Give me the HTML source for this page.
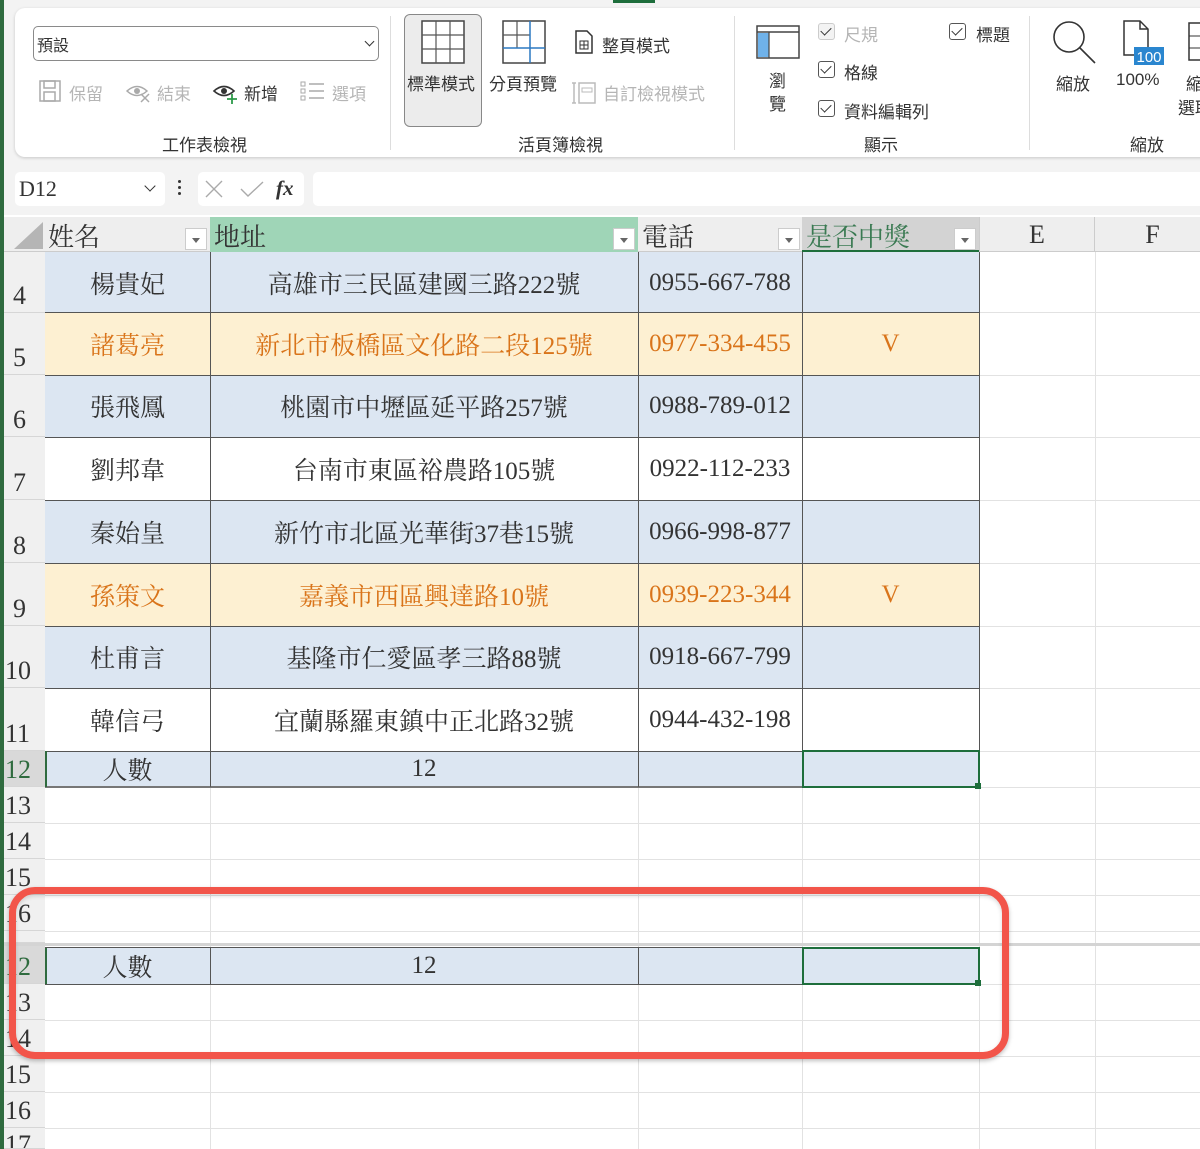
<!DOCTYPE html>
<html><head><meta charset="utf-8">
<style>
*{margin:0;padding:0;box-sizing:border-box}
body{width:1200px;height:1149px;overflow:hidden;background:#fff;position:relative;font-family:"Liberation Sans","Noto Sans CJK TC",sans-serif;color:#333}
.a{position:absolute}
.rb{font-size:17px;color:#333;white-space:nowrap}
.dis{color:#b5b5b5}
.cell{position:absolute;display:flex;align-items:center;justify-content:center;font-family:"Liberation Serif","Noto Serif CJK SC",serif;font-size:25px;color:#333}
.rh{position:absolute;left:4px;width:41px;background:#f0f0f0;border-bottom:1px solid #d6d6d6;font-family:"Liberation Serif",serif;font-size:26px;color:#333;display:flex;align-items:flex-end;padding-left:9px;line-height:1;padding-bottom:3px;overflow:hidden}
.hl{position:absolute;left:45px;right:0;height:1px;background:#e2e2e2}
.vl{position:absolute;width:1px;background:#e2e2e2}
.cb{position:absolute;width:17px;height:17px;border:1.5px solid #555;border-radius:3px}
.cb::after{content:"";position:absolute;left:4px;top:1px;width:5px;height:9px;border:solid #333;border-width:0 1.6px 1.6px 0;transform:rotate(45deg)}
.dd{position:absolute;width:22px;height:22px;background:#fff;border:1px solid #ccc}
.dd::after{content:"";position:absolute;left:6px;top:9px;border:4px solid transparent;border-top:5px solid #666}
</style></head><body>
<div class="a" style="left:0;top:0;width:1200px;height:215px;background:#f3f3f3"></div>
<div class="a" style="left:0;top:0;width:4px;height:1149px;background:#2f6b3f"></div>
<div class="a" style="left:613px;top:0;width:42px;height:3px;background:#1e6e3c"></div>
<div class="a" style="left:15px;top:8px;width:1200px;height:149px;background:#fff;border-radius:10px;box-shadow:0 1px 3px rgba(0,0,0,.18)"></div>
<div class="a" style="left:33px;top:26px;width:346px;height:35px;border:1px solid #8a8a8a;border-radius:5px;background:#fff"></div>
<div class="a rb" style="left:37px;top:32px;font-size:16px">預設</div>
<div class="a" style="left:366px;top:38px;width:7px;height:7px;border:solid #333;border-width:0 1.5px 1.5px 0;transform:rotate(45deg)"></div>
<svg class="a" style="left:38px;top:79px" width="24" height="24" viewBox="0 0 24 24"><rect x="2" y="2" width="20" height="20" fill="none" stroke="#aaa" stroke-width="1.5"/><rect x="6" y="2" width="11" height="7" fill="none" stroke="#aaa" stroke-width="1.5"/><rect x="6" y="13" width="11" height="9" fill="none" stroke="#aaa" stroke-width="1.5"/></svg>
<div class="a rb dis" style="left:69px;top:80px">保留</div>
<svg class="a" style="left:125px;top:82px" width="28" height="22" viewBox="0 0 28 22"><path d="M2 9 Q12 0 22 9 Q12 18 2 9Z" fill="none" stroke="#aaa" stroke-width="1.5"/><circle cx="12" cy="9" r="3" fill="#aaa"/><path d="M16 12 L24 20 M24 12 L16 20" stroke="#aaa" stroke-width="1.5"/></svg>
<div class="a rb dis" style="left:157px;top:80px">結束</div>
<svg class="a" style="left:212px;top:82px" width="28" height="22" viewBox="0 0 28 22"><path d="M2 9 Q12 0 22 9 Q12 18 2 9Z" fill="none" stroke="#333" stroke-width="1.6"/><circle cx="12" cy="9" r="3" fill="#333"/><path d="M20 12 V22 M15 17 H25" stroke="#2e9a4a" stroke-width="1.8"/></svg>
<div class="a rb" style="left:244px;top:80px">新增</div>
<svg class="a" style="left:300px;top:80px" width="26" height="22" viewBox="0 0 26 22"><rect x="1" y="2" width="4" height="4" fill="none" stroke="#aaa"/><rect x="1" y="9" width="4" height="4" fill="none" stroke="#aaa"/><rect x="1" y="16" width="4" height="4" fill="none" stroke="#aaa"/><path d="M9 4H24M9 11H24M9 18H24" stroke="#aaa" stroke-width="1.5"/></svg>
<div class="a rb dis" style="left:332px;top:80px">選項</div>
<div class="a rb" style="left:162px;top:131px">工作表檢視</div>
<div class="a" style="left:390px;top:16px;width:1px;height:134px;background:#ddd"></div>
<div class="a" style="left:404px;top:14px;width:78px;height:113px;background:#ececec;border:1.5px solid #888;border-radius:6px"></div>
<svg class="a" style="left:421px;top:20px" width="44" height="44" viewBox="0 0 44 44"><rect x="1" y="1" width="42" height="42" fill="#fff" stroke="#444" stroke-width="1.5"/><path d="M15 1V43M29 1V43M1 15H43M1 29H43" stroke="#555" stroke-width="1.2"/></svg>
<div class="a rb" style="left:407px;top:70px">標準模式</div>
<svg class="a" style="left:502px;top:20px" width="44" height="44" viewBox="0 0 44 44"><rect x="1" y="1" width="42" height="42" fill="#fff" stroke="#444" stroke-width="1.5"/><path d="M15 1V28M1 15H28" stroke="#555" stroke-width="1.2"/><path d="M28 1V43M1 28H43" stroke="#2b79c2" stroke-width="1.5"/></svg>
<div class="a rb" style="left:489px;top:70px">分頁預覽</div>
<svg class="a" style="left:574px;top:30px" width="20" height="24" viewBox="0 0 20 24"><path d="M2 1H13L18 6V23H2Z" fill="none" stroke="#333" stroke-width="1.5"/><rect x="6" y="11" width="8" height="8" fill="none" stroke="#333"/><path d="M10 11V19M6 15H14" stroke="#333"/></svg>
<div class="a rb" style="left:602px;top:32px">整頁模式</div>
<svg class="a" style="left:571px;top:79px" width="26" height="26" viewBox="0 0 26 26"><path d="M3 4V24M1 4H5M1 24H5" stroke="#bbb" stroke-width="1.5"/><rect x="8" y="4" width="16" height="20" fill="none" stroke="#bbb" stroke-width="1.5"/><rect x="11" y="9" width="10" height="4" fill="none" stroke="#bbb"/></svg>
<div class="a rb dis" style="left:603px;top:80px">自訂檢視模式</div>
<div class="a rb" style="left:518px;top:131px">活頁簿檢視</div>
<div class="a" style="left:734px;top:16px;width:1px;height:134px;background:#ddd"></div>
<svg class="a" style="left:756px;top:25px" width="44" height="34" viewBox="0 0 44 34"><rect x="1" y="1" width="42" height="32" fill="#fff" stroke="#444" stroke-width="1.5"/><path d="M1 7H43" stroke="#444" stroke-width="1.5"/><rect x="2" y="8" width="11" height="24" fill="#6fb2ea"/><path d="M13 7V33" stroke="#444" stroke-width="1.2"/></svg>
<div class="a rb" style="left:769px;top:70px;line-height:23px">瀏<br>覽</div>
<div class="cb" style="left:818px;top:23px;border-color:#ccc;background:#f3f3f3"></div>
<div class="a rb dis" style="left:844px;top:21px">尺規</div>
<div class="cb" style="left:818px;top:61px"></div>
<div class="a rb" style="left:844px;top:59px">格線</div>
<div class="cb" style="left:818px;top:100px"></div>
<div class="a rb" style="left:844px;top:98px">資料編輯列</div>
<div class="cb" style="left:949px;top:23px"></div>
<div class="a rb" style="left:976px;top:21px">標題</div>
<div class="a rb" style="left:864px;top:131px">顯示</div>
<div class="a" style="left:1029px;top:16px;width:1px;height:134px;background:#ddd"></div>
<svg class="a" style="left:1050px;top:18px" width="48" height="48" viewBox="0 0 48 48"><circle cx="19" cy="19" r="15" fill="none" stroke="#333" stroke-width="1.6"/><path d="M30 30L45 45" stroke="#333" stroke-width="1.6"/></svg>
<div class="a rb" style="left:1056px;top:70px">縮放</div>
<svg class="a" style="left:1120px;top:20px" width="46" height="46" viewBox="0 0 46 46"><path d="M4 1H20L28 9V35H4Z" fill="none" stroke="#333" stroke-width="1.5"/><path d="M20 1V9H28" fill="none" stroke="#333" stroke-width="1.5"/><rect x="14" y="27" width="30" height="18" fill="#2a86cf"/><text x="29" y="42" font-family="Liberation Sans" font-size="15" fill="#fff" text-anchor="middle">100</text></svg>
<div class="a rb" style="left:1116px;top:70px">100%</div>
<svg class="a" style="left:1188px;top:22px" width="12" height="40" viewBox="0 0 12 40"><rect x="1" y="1" width="20" height="37" fill="none" stroke="#333" stroke-width="1.5"/><path d="M1 14H12M1 26H12" stroke="#333"/></svg>
<div class="a rb" style="left:1186px;top:70px">縮</div>
<div class="a rb" style="left:1178px;top:94px">選取</div>
<div class="a rb" style="left:1130px;top:131px">縮放</div>
<div class="a" style="left:15px;top:172px;width:150px;height:34px;background:#fff;border-radius:5px"></div>
<div class="a" style="left:19px;top:176px;font-family:'Liberation Serif',serif;font-size:22px;color:#333">D12</div>
<div class="a" style="left:146px;top:182px;width:8px;height:8px;border:solid #333;border-width:0 1.5px 1.5px 0;transform:rotate(45deg)"></div>
<div class="a" style="left:178px;top:180px;width:3px;height:3px;background:#333;border-radius:2px;box-shadow:0 6px 0 #333,0 12px 0 #333"></div>
<div class="a" style="left:198px;top:172px;width:106px;height:34px;background:#fff;border-radius:5px"></div>
<svg class="a" style="left:203px;top:178px" width="100" height="24" viewBox="0 0 100 24"><path d="M3 3L19 19M19 3L3 19" stroke="#aaa" stroke-width="1.4"/><path d="M38 11L45 18L60 4" stroke="#aaa" stroke-width="1.4" fill="none"/><text x="73" y="17" font-family="Liberation Serif" font-style="italic" font-weight="bold" font-size="21" fill="#333">fx</text></svg>
<div class="a" style="left:313px;top:172px;width:900px;height:34px;background:#fff;border-radius:5px"></div>
<div class="a" style="left:4px;top:217px;width:1196px;height:35px;background:#eeeeee;border-bottom:1px solid #ccc"></div>
<svg class="a" style="left:10px;top:220px" width="34" height="30"><path d="M33 2V29H4Z" fill="#b5b5b5"/></svg>
<div class="a" style="left:210px;top:217px;width:428px;height:35px;background:#9fd5b7"></div>
<div class="a" style="left:802px;top:217px;width:177px;height:35px;background:#d3d3d3;border-bottom:2px solid #1e6e3c"></div>
<div class="cell" style="left:48px;top:218px;height:34px;justify-content:flex-start;font-size:26px">姓名</div>
<div class="dd" style="left:185px;top:228px"></div>
<div class="cell" style="left:214px;top:218px;height:34px;justify-content:flex-start;font-size:26px">地址</div>
<div class="dd" style="left:613px;top:228px"></div>
<div class="cell" style="left:642px;top:218px;height:34px;justify-content:flex-start;font-size:26px">電話</div>
<div class="dd" style="left:778px;top:228px"></div>
<div class="cell" style="left:806px;top:218px;height:34px;justify-content:flex-start;font-size:26px;color:#3a7a52">是否中獎</div>
<div class="dd" style="left:954px;top:228px"></div>
<div class="cell" style="left:979px;top:218px;width:116px;height:34px;font-size:26px">E</div>
<div class="cell" style="left:1095px;top:218px;width:115px;height:34px;font-size:26px">F</div>
<div class="a" style="left:1094px;top:217px;width:1px;height:35px;background:#ccc"></div>
<div class="a" style="left:979px;top:217px;width:1px;height:35px;background:#ccc"></div>
<div class="vl" style="left:210px;top:252px;height:897px"></div>
<div class="vl" style="left:638px;top:252px;height:897px"></div>
<div class="vl" style="left:802px;top:252px;height:897px"></div>
<div class="vl" style="left:979px;top:252px;height:897px"></div>
<div class="vl" style="left:1095px;top:252px;height:897px"></div>
<div class="hl" style="top:312px"></div><div class="hl" style="top:375px"></div><div class="hl" style="top:437px"></div><div class="hl" style="top:500px"></div><div class="hl" style="top:563px"></div><div class="hl" style="top:626px"></div><div class="hl" style="top:688px"></div><div class="hl" style="top:751px"></div><div class="hl" style="top:787px"></div><div class="hl" style="top:823px"></div><div class="hl" style="top:859px"></div><div class="hl" style="top:895px"></div><div class="hl" style="top:931px"></div><div class="hl" style="top:984px"></div><div class="hl" style="top:1020px"></div><div class="hl" style="top:1056px"></div><div class="hl" style="top:1092px"></div><div class="hl" style="top:1128px"></div>
<div class="a" style="left:4px;top:943px;width:1196px;height:3px;background:#d4d4d4"></div>
<div class="rh" style="top:252px;height:61px">4</div>
<div class="rh" style="top:313px;height:62px">5</div>
<div class="rh" style="top:375px;height:62px">6</div>
<div class="rh" style="top:437px;height:63px">7</div>
<div class="rh" style="top:500px;height:63px">8</div>
<div class="rh" style="top:563px;height:63px">9</div>
<div class="rh" style="top:626px;height:62px;padding-left:1px">10</div>
<div class="rh" style="top:688px;height:63px;padding-left:1px">11</div>
<div class="rh" style="top:751px;height:36px;padding-left:1px;background:#d9d9d9;color:#2f6b3f">12</div>
<div class="rh" style="top:787px;height:36px;padding-left:1px">13</div>
<div class="rh" style="top:823px;height:36px;padding-left:1px">14</div>
<div class="rh" style="top:859px;height:36px;padding-left:1px">15</div>
<div class="rh" style="top:895px;height:36px;padding-left:1px">16</div>
<div class="rh" style="top:931px;height:12px;padding-left:1px"></div>
<div class="rh" style="top:946px;height:38px;padding-left:1px;background:#d9d9d9;color:#2f6b3f">12</div>
<div class="rh" style="top:984px;height:36px;padding-left:1px">13</div>
<div class="rh" style="top:1020px;height:36px;padding-left:1px">14</div>
<div class="rh" style="top:1056px;height:36px;padding-left:1px">15</div>
<div class="rh" style="top:1092px;height:36px;padding-left:1px">16</div>
<div class="rh" style="top:1128px;height:21px;padding-left:1px;align-items:flex-start;padding-top:4px">17</div>
<div class="a" style="left:45px;top:252px;width:934px;height:61px;background:#dce6f2"></div>
<div class="a" style="left:45px;top:313px;width:934px;height:62px;background:#fdf0d2"></div>
<div class="a" style="left:45px;top:375px;width:934px;height:62px;background:#dce6f2"></div>
<div class="a" style="left:45px;top:437px;width:934px;height:63px;background:#fff"></div>
<div class="a" style="left:45px;top:500px;width:934px;height:63px;background:#dce6f2"></div>
<div class="a" style="left:45px;top:563px;width:934px;height:63px;background:#fdf0d2"></div>
<div class="a" style="left:45px;top:626px;width:934px;height:62px;background:#dce6f2"></div>
<div class="a" style="left:45px;top:688px;width:934px;height:63px;background:#fff"></div>
<div class="a" style="left:45px;top:751px;width:934px;height:36px;background:#dce6f2"></div>
<div class="a" style="left:45px;top:948px;width:934px;height:36px;background:#dce6f2"></div>
<div class="a" style="left:45px;top:312px;width:934px;height:1px;background:#555"></div>
<div class="a" style="left:45px;top:375px;width:934px;height:1px;background:#555"></div>
<div class="a" style="left:45px;top:437px;width:934px;height:1px;background:#555"></div>
<div class="a" style="left:45px;top:500px;width:934px;height:1px;background:#555"></div>
<div class="a" style="left:45px;top:563px;width:934px;height:1px;background:#555"></div>
<div class="a" style="left:45px;top:626px;width:934px;height:1px;background:#555"></div>
<div class="a" style="left:45px;top:688px;width:934px;height:1px;background:#555"></div>
<div class="a" style="left:45px;top:751px;width:934px;height:1px;background:#555"></div>
<div class="a" style="left:45px;top:786px;width:934px;height:2px;background:#777"></div>
<div class="a" style="left:45px;top:947px;width:934px;height:1px;background:#555"></div>
<div class="a" style="left:45px;top:984px;width:934px;height:1px;background:#555"></div>
<div class="a" style="left:210px;top:252px;width:1px;height:535px;background:#555"></div>
<div class="a" style="left:638px;top:252px;width:1px;height:535px;background:#555"></div>
<div class="a" style="left:802px;top:252px;width:1px;height:535px;background:#555"></div>
<div class="a" style="left:979px;top:252px;width:1px;height:535px;background:#555"></div>
<div class="a" style="left:210px;top:947px;width:1px;height:37px;background:#555"></div>
<div class="a" style="left:638px;top:947px;width:1px;height:37px;background:#555"></div>
<div class="a" style="left:45px;top:751px;width:2px;height:36px;background:#2f6b3f"></div>
<div class="a" style="left:45px;top:948px;width:2px;height:36px;background:#2f6b3f"></div>
<div class="a" style="left:802px;top:750px;width:178px;height:38px;border:2px solid #1e6e3c"></div>
<div class="a" style="left:975px;top:783px;width:6px;height:6px;background:#1e6e3c"></div>
<div class="a" style="left:802px;top:947px;width:178px;height:38px;border:2px solid #1e6e3c"></div>
<div class="a" style="left:975px;top:980px;width:6px;height:6px;background:#1e6e3c"></div>
<div class="cell" style="left:45px;top:252px;width:165px;height:61px">楊貴妃</div><div class="cell" style="left:210px;top:252px;width:428px;height:61px">高雄市三民區建國三路222號</div><div class="cell" style="left:638px;top:252px;width:164px;height:61px">0955-667-788</div>
<div class="cell" style="left:45px;top:313px;width:165px;height:62px;color:#d9741a">諸葛亮</div><div class="cell" style="left:210px;top:313px;width:428px;height:62px;color:#d9741a">新北市板橋區文化路二段125號</div><div class="cell" style="left:638px;top:313px;width:164px;height:62px;color:#d9741a">0977-334-455</div><div class="cell" style="left:802px;top:313px;width:177px;height:62px;color:#d9741a">V</div>
<div class="cell" style="left:45px;top:375px;width:165px;height:62px">張飛鳳</div><div class="cell" style="left:210px;top:375px;width:428px;height:62px">桃園市中壢區延平路257號</div><div class="cell" style="left:638px;top:375px;width:164px;height:62px">0988-789-012</div>
<div class="cell" style="left:45px;top:437px;width:165px;height:63px">劉邦韋</div><div class="cell" style="left:210px;top:437px;width:428px;height:63px">台南市東區裕農路105號</div><div class="cell" style="left:638px;top:437px;width:164px;height:63px">0922-112-233</div>
<div class="cell" style="left:45px;top:500px;width:165px;height:63px">秦始皇</div><div class="cell" style="left:210px;top:500px;width:428px;height:63px">新竹市北區光華街37巷15號</div><div class="cell" style="left:638px;top:500px;width:164px;height:63px">0966-998-877</div>
<div class="cell" style="left:45px;top:563px;width:165px;height:63px;color:#d9741a">孫策文</div><div class="cell" style="left:210px;top:563px;width:428px;height:63px;color:#d9741a">嘉義市西區興達路10號</div><div class="cell" style="left:638px;top:563px;width:164px;height:63px;color:#d9741a">0939-223-344</div><div class="cell" style="left:802px;top:563px;width:177px;height:63px;color:#d9741a">V</div>
<div class="cell" style="left:45px;top:626px;width:165px;height:62px">杜甫言</div><div class="cell" style="left:210px;top:626px;width:428px;height:62px">基隆市仁愛區孝三路88號</div><div class="cell" style="left:638px;top:626px;width:164px;height:62px">0918-667-799</div>
<div class="cell" style="left:45px;top:688px;width:165px;height:63px">韓信弓</div><div class="cell" style="left:210px;top:688px;width:428px;height:63px">宜蘭縣羅東鎮中正北路32號</div><div class="cell" style="left:638px;top:688px;width:164px;height:63px">0944-432-198</div>
<div class="cell" style="left:45px;top:751px;width:165px;height:36px">人數</div><div class="cell" style="left:210px;top:751px;width:428px;height:36px">12</div>
<div class="cell" style="left:45px;top:948px;width:165px;height:36px">人數</div><div class="cell" style="left:210px;top:948px;width:428px;height:36px">12</div>
<div class="a" style="left:9px;top:887px;width:1000px;height:172px;border:7px solid #f2554a;border-radius:26px;box-shadow:0 2px 4px rgba(0,0,0,.25),inset 0 2px 4px rgba(0,0,0,.15)"></div>
</body></html>
